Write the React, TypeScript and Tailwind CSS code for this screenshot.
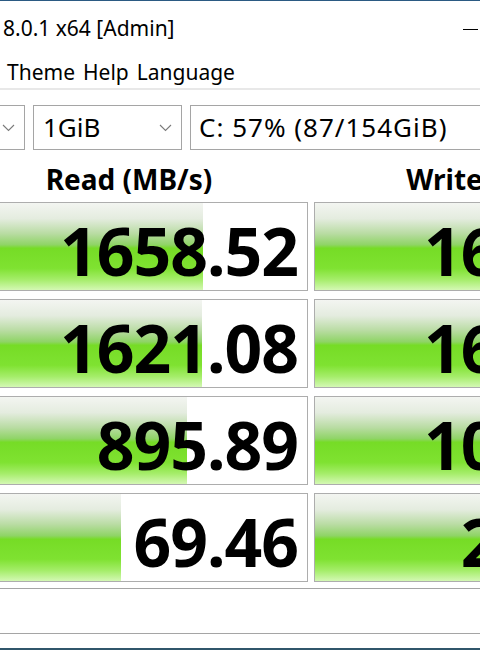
import React from "react";

interface Row {
  read: string;
  readFill: number;
  write: string;
  writeFill: number;
}

const rows: Row[] = [
  { read: "1658.52", readFill: 252, write: "1615.34", writeFill: 250 },
  { read: "1621.08", readFill: 251, write: "1602.77", writeFill: 249 },
  { read: "895.89", readFill: 236, write: "1047.63", writeFill: 240 },
  { read: "69.46", readFill: 170, write: "231.58", writeFill: 200 },
];

const barBg =
  "bg-[linear-gradient(to_bottom,#f3f5f1_0%,#e4ecdf_18%,#b9dca3_35%,#8fd466_48%,#76dc26_52%,#7fe231_75%,#a5ed6a_88%,#d4f8b4_100%)]";

const Chevron: React.FC = () => (
  <svg width="13" height="8" viewBox="0 0 13 8" className="shrink-0">
    <polyline
      points="1,1 6.5,6.5 12,1"
      fill="none"
      stroke="#7a7a7a"
      strokeWidth="1.1"
    />
  </svg>
);

const Cell: React.FC<{ value: string; fill: number }> = ({ value, fill }) => (
  <div className="relative h-[89px] w-[358px] shrink-0 border border-[#adadad] bg-white overflow-hidden">
    <div className={`absolute left-0 top-0 bottom-0 ${barBg}`} style={{ width: fill }} />
    <div className="relative h-full flex items-center justify-end pt-[6px] pr-[9px] text-[66px] font-bold leading-none tracking-[-1px] text-black">
      {value}
    </div>
  </div>
);

const App: React.FC = () => {
  return (
    <div className="w-[480px] h-[650px] overflow-hidden bg-white border-t border-[#2b5a83] font-['Noto_Sans',sans-serif] text-black">
      {/* title bar */}
      <div className="h-[56px] flex items-center pl-[3px] text-[21px]">
        <span>8.0.1 x64 [Admin]</span>
        <span className="ml-auto mr-[2px] w-[15px] h-px bg-black" />
      </div>

      {/* menu */}
      <div className="h-[31px] flex items-center gap-[8px] pl-[7px] text-[21px]">
        <span>Theme</span>
        <span>Help</span>
        <span>Language</span>
      </div>
      <div className="h-[2px] bg-[#e8e8e8]" />

      {/* selectors */}
      <div className="mt-[15px] flex gap-[8px] ml-[-80px] text-[26px]">
        <div className="h-[45px] w-[105px] shrink-0 border border-[#a5a5a5] flex items-center justify-end pr-[9px]">
          <Chevron />
        </div>
        <div className="h-[45px] w-[149px] shrink-0 border border-[#a5a5a5] flex items-center pl-[9px] pr-[9px]">
          <span>1GiB</span>
          <span className="ml-auto">
            <Chevron />
          </span>
        </div>
        <div className="h-[45px] w-[360px] shrink-0 border border-[#a5a5a5] flex items-center pl-[8px] whitespace-nowrap tracking-[1px]">
          <span>C: 57% (87/154GiB)</span>
        </div>
      </div>

      {/* headers */}
      <div className="h-[52px] pt-[6px] flex gap-[6px] ml-[-50px] text-[28px] font-bold whitespace-nowrap">
        <div className="w-[358px] shrink-0 flex items-center justify-center">Read (MB/s)</div>
        <div className="w-[358px] shrink-0 flex items-center justify-center">Write (MB/s)</div>
      </div>

      {/* results */}
      <div className="ml-[-50px] flex flex-col gap-[8px]">
        {rows.map((r) => (
          <div key={r.read} className="flex gap-[6px]">
            <Cell value={r.read} fill={r.readFill} />
            <Cell value={r.write} fill={r.writeFill} />
          </div>
        ))}
      </div>

      {/* comment */}
      <div className="mt-[6px] ml-[-10px] w-[500px] h-[46px] border border-[#a5a5a5]" />

      <div className="mt-[14px] h-[2px] bg-[#30566b]" />
    </div>
  );
};

export default App;
